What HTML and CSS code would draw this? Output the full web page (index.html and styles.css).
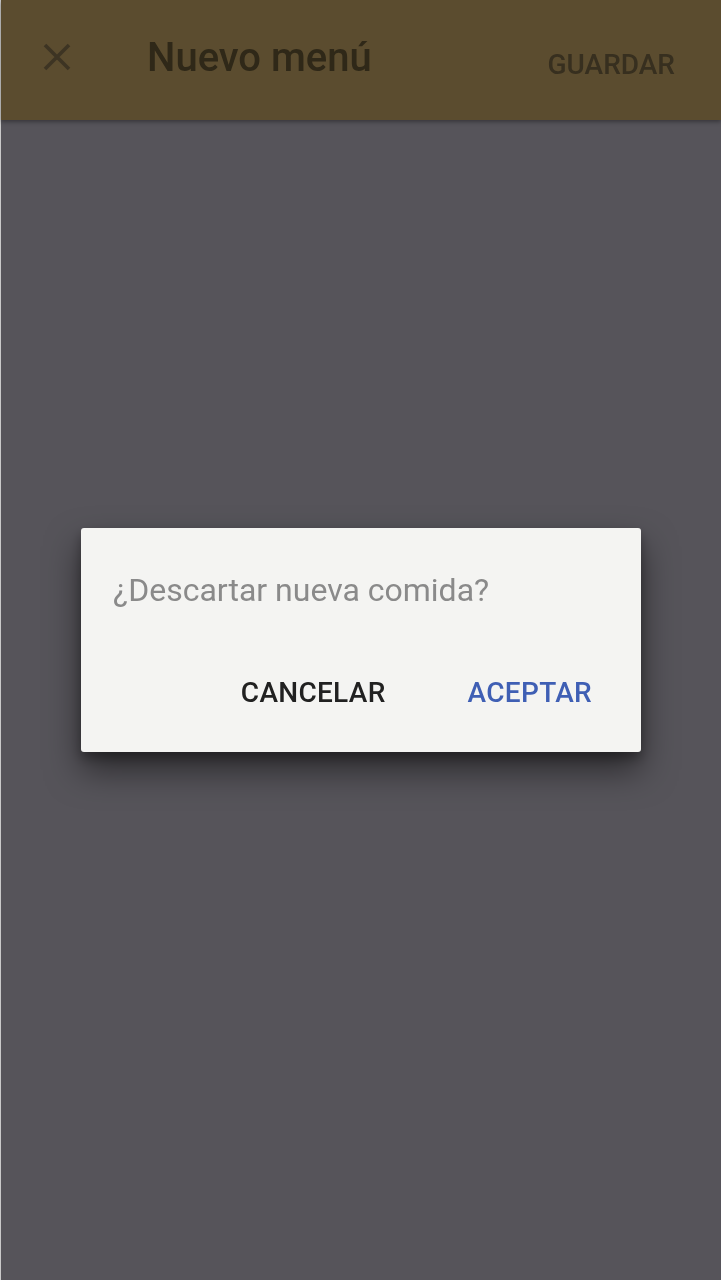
FILE: index.html
```html
<!DOCTYPE html>
<html lang="es">
<head>
<meta charset="utf-8">
<title>Nuevo menú</title>
<link rel="stylesheet" href="styles.css">
</head>
<body>
<div class="app">
  <header class="appbar">
    <button class="icon-btn" aria-label="Cerrar">
      <svg width="28" height="28" viewBox="0 0 28 28"><path d="M2 2 L26 26 M26 2 L2 26" stroke="currentColor" stroke-width="3.6" fill="none"/></svg>
    </button>
    <h1 class="title">Nuevo menú</h1>
    <span class="action">GUARDAR</span>
  </header>
  <main class="content"></main>
</div>
<div class="overlay">
  <div class="dialog" role="dialog">
    <p class="dialog-text">¿Descartar nueva comida?</p>
    <div class="dialog-actions">
      <button class="btn btn-cancel">CANCELAR</button>
      <button class="btn btn-ok">ACEPTAR</button>
    </div>
  </div>
</div>
</body>
</html>
```
FILE: styles.css
```css
html, body {
  margin: 0;
  padding: 0;
  height: 100%;
}
body {
  background: #c9c9c9;
  font-family: Roboto, "Noto Sans", Arial, sans-serif;
}
.app {
  margin-left: 1px;
  width: 720px;
  height: 1280px;
  display: flex;
  flex-direction: column;
  background: #56545a;
}
.appbar {
  height: 120px;
  flex: none;
  background: #5b4c2f;
  box-shadow: 0 2px 4px rgba(0,0,0,0.35);
  display: flex;
  align-items: flex-start;
  padding: 0 46px 0 42px;
  box-sizing: border-box;
  position: relative;
  z-index: 1;
}
.icon-btn {
  background: none;
  border: 0;
  padding: 0;
  margin-top: 43px;
  width: 28px;
  height: 28px;
  color: #3d3423;
  display: block;
}
.icon-btn svg { display: block; }
.title {
  margin: 34px 0 0 76px;
  font-size: 40px;
  line-height: 48px;
  font-weight: 500;
  color: #2f2818;
  flex: 1;
}
.action {
  margin-top: 49px;
  font-size: 28px;
  line-height: 32px;
  font-weight: 500;
  color: #372f1f;
}
.content {
  flex: 1;
}
.overlay {
  position: fixed;
  inset: 0;
  display: flex;
  align-items: center;
  justify-content: center;
  padding-left: 1px;
}
.dialog {
  width: 560px;
  height: 224px;
  box-sizing: border-box;
  background: #f4f4f2;
  border-radius: 3px;
  box-shadow: 0 18px 34px rgba(0,0,0,0.5), 0 6px 12px rgba(0,0,0,0.3);
  padding: 44px 33px 0 32px;
  display: flex;
  flex-direction: column;
}
.dialog-text {
  margin: 0;
  font-size: 32px;
  line-height: 36px;
  color: #8a8a8a;
}
.dialog-actions {
  margin-top: 53px;
  display: flex;
  justify-content: flex-end;
  gap: 50px;
}
.btn {
  background: none;
  border: 0;
  padding: 16px 16px;
  font-family: inherit;
  font-size: 28px;
  line-height: 32px;
  font-weight: 500;
  letter-spacing: 0.3px;
}
.btn-cancel { color: #212121; }
.btn-ok { color: #3f5fb4; }
```
